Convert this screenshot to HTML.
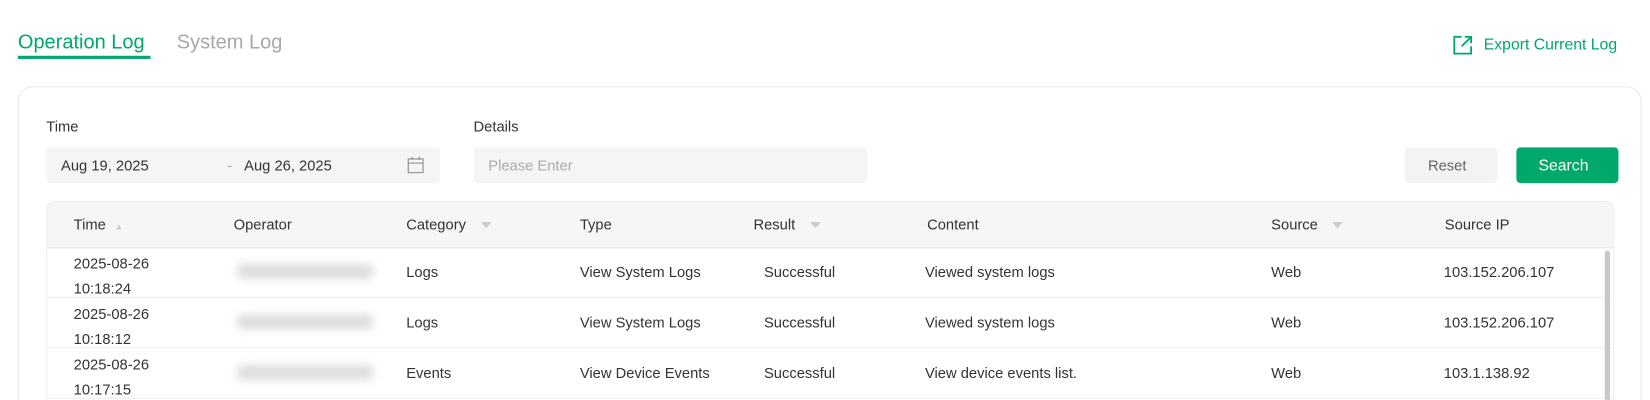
<!DOCTYPE html>
<html style="overflow:hidden;height:400px;width:1650px"><head><style>
body{margin:0;width:1650px;height:400px;overflow:hidden;background:#fff;font-family:"Liberation Sans",sans-serif;color:#333;position:relative}
#w{position:absolute;left:0;top:0;width:1568px;height:380px;overflow:hidden;transform:scale(1.0523);transform-origin:0 0}
.a{position:absolute;white-space:nowrap}
.card{position:absolute;left:17px;top:82px;width:1541px;height:340px;border:1px solid #e8e8e8;border-radius:14px}
.in{background:#f5f5f5;border-radius:4px;position:absolute;height:34px}
.tbl{position:absolute;left:44px;top:191px;width:1488px;height:260px;border:1px solid #eee;border-radius:8px;overflow:hidden}
.hd{position:absolute;left:0;top:0;width:100%;height:43px;background:#f6f6f6;border-bottom:1px solid #e8e8e8}
.rw{position:absolute;left:0;width:100%;height:47px;border-bottom:1px solid #eee}
.t{font-size:14px;color:#333}
.blur{position:absolute;width:130px;height:14px;background:#ddd;filter:blur(4px);border-radius:6px}
.fl{display:inline-block;width:0;height:0;border-left:5px solid transparent;border-right:5px solid transparent;border-top:6px solid #ccc;margin-left:14px;vertical-align:middle}
</style></head><body><div id="w">
<div class="a" style="left:17px;top:30px;font-size:19px;color:#00a86b">Operation Log</div>
<div class="a" style="left:17px;top:53px;width:126px;height:3px;background:#00a86b"></div>
<div class="a" style="left:168px;top:30px;font-size:19px;color:#a8a8a8">System Log</div>
<svg class="a" style="left:1380px;top:33px" width="20" height="20" viewBox="0 0 20 20" fill="none" stroke="#00a86b" stroke-width="1.7"><path d="M9 2H2v16h16v-7M12 2h6v6M18 2l-9 9"/></svg>
<div class="a" style="left:1410px;top:34px;font-size:15px;color:#00a86b">Export Current Log</div>
<div class="card"></div>
<div class="a t" style="left:44px;top:112px">Time</div>
<div class="in" style="left:44px;top:140px;width:374px"></div>
<div class="a t" style="left:58px;top:149px">Aug 19, 2025</div>
<div class="a t" style="left:216px;top:149px;color:#aaa">-</div>
<div class="a t" style="left:232px;top:149px">Aug 26, 2025</div>
<svg class="a" style="left:387px;top:148px" width="16" height="17" viewBox="0 0 16 17" fill="none" stroke="#999" stroke-width="1.2"><rect x="1" y="3" width="14" height="13"/><path d="M1 7h14M4.5 1v3M11.5 1v3"/></svg>
<div class="a t" style="left:450px;top:112px">Details</div>
<div class="in" style="left:450px;top:140px;width:374px"></div>
<div class="a t" style="left:464px;top:149px;color:#aaa">Please Enter</div>
<div class="in" style="left:1335px;top:140px;width:88px;background:#f3f3f3"></div>
<div class="a t" style="left:1357px;top:149px;color:#666">Reset</div>
<div class="in" style="left:1441px;top:140px;width:97px;background:#00a86b"></div>
<div class="a" style="left:1462px;top:149px;font-size:15px;color:#fff">Search</div>
<div class="tbl">
<div class="hd"></div>
<div class="rw" style="top:43px"></div><div class="rw" style="top:91px"></div><div class="rw" style="top:139px"></div>
<div class="a" style="left:1480px;top:46px;width:5px;height:200px;background:#c8c8c8;border-radius:3px"></div>
</div>
<div class="a t" style="left:70px;top:205px">Time <span style="color:#ccc;font-size:10px;margin-left:6px">&#x25B4;</span></div>
<div class="a t" style="left:222px;top:205px">Operator</div>
<div class="a t" style="left:386px;top:205px">Category<span class="fl"></span></div>
<div class="a t" style="left:551px;top:205px">Type</div>
<div class="a t" style="left:716px;top:205px">Result<span class="fl"></span></div>
<div class="a t" style="left:881px;top:205px">Content</div>
<div class="a t" style="left:1208px;top:205px">Source<span class="fl"></span></div>
<div class="a t" style="left:1373px;top:205px">Source IP</div>

<div class="a t" style="left:70px;top:238px;line-height:24px">2025-08-26<br>10:18:24</div>
<div class="blur" style="left:225px;top:251px"></div>
<div class="a t" style="left:386px;top:250px">Logs</div><div class="a t" style="left:551px;top:250px">View System Logs</div><div class="a t" style="left:726px;top:250px">Successful</div><div class="a t" style="left:879px;top:250px">Viewed system logs</div><div class="a t" style="left:1208px;top:250px">Web</div><div class="a t" style="left:1372px;top:250px">103.152.206.107</div>

<div class="a t" style="left:70px;top:286px;line-height:24px">2025-08-26<br>10:18:12</div>
<div class="blur" style="left:225px;top:299px"></div>
<div class="a t" style="left:386px;top:298px">Logs</div><div class="a t" style="left:551px;top:298px">View System Logs</div><div class="a t" style="left:726px;top:298px">Successful</div><div class="a t" style="left:879px;top:298px">Viewed system logs</div><div class="a t" style="left:1208px;top:298px">Web</div><div class="a t" style="left:1372px;top:298px">103.152.206.107</div>

<div class="a t" style="left:70px;top:334px;line-height:24px">2025-08-26<br>10:17:15</div>
<div class="blur" style="left:225px;top:347px"></div>
<div class="a t" style="left:386px;top:346px">Events</div><div class="a t" style="left:551px;top:346px">View Device Events</div><div class="a t" style="left:726px;top:346px">Successful</div><div class="a t" style="left:879px;top:346px">View device events list.</div><div class="a t" style="left:1208px;top:346px">Web</div><div class="a t" style="left:1372px;top:346px">103.1.138.92</div>
</div></body></html>
